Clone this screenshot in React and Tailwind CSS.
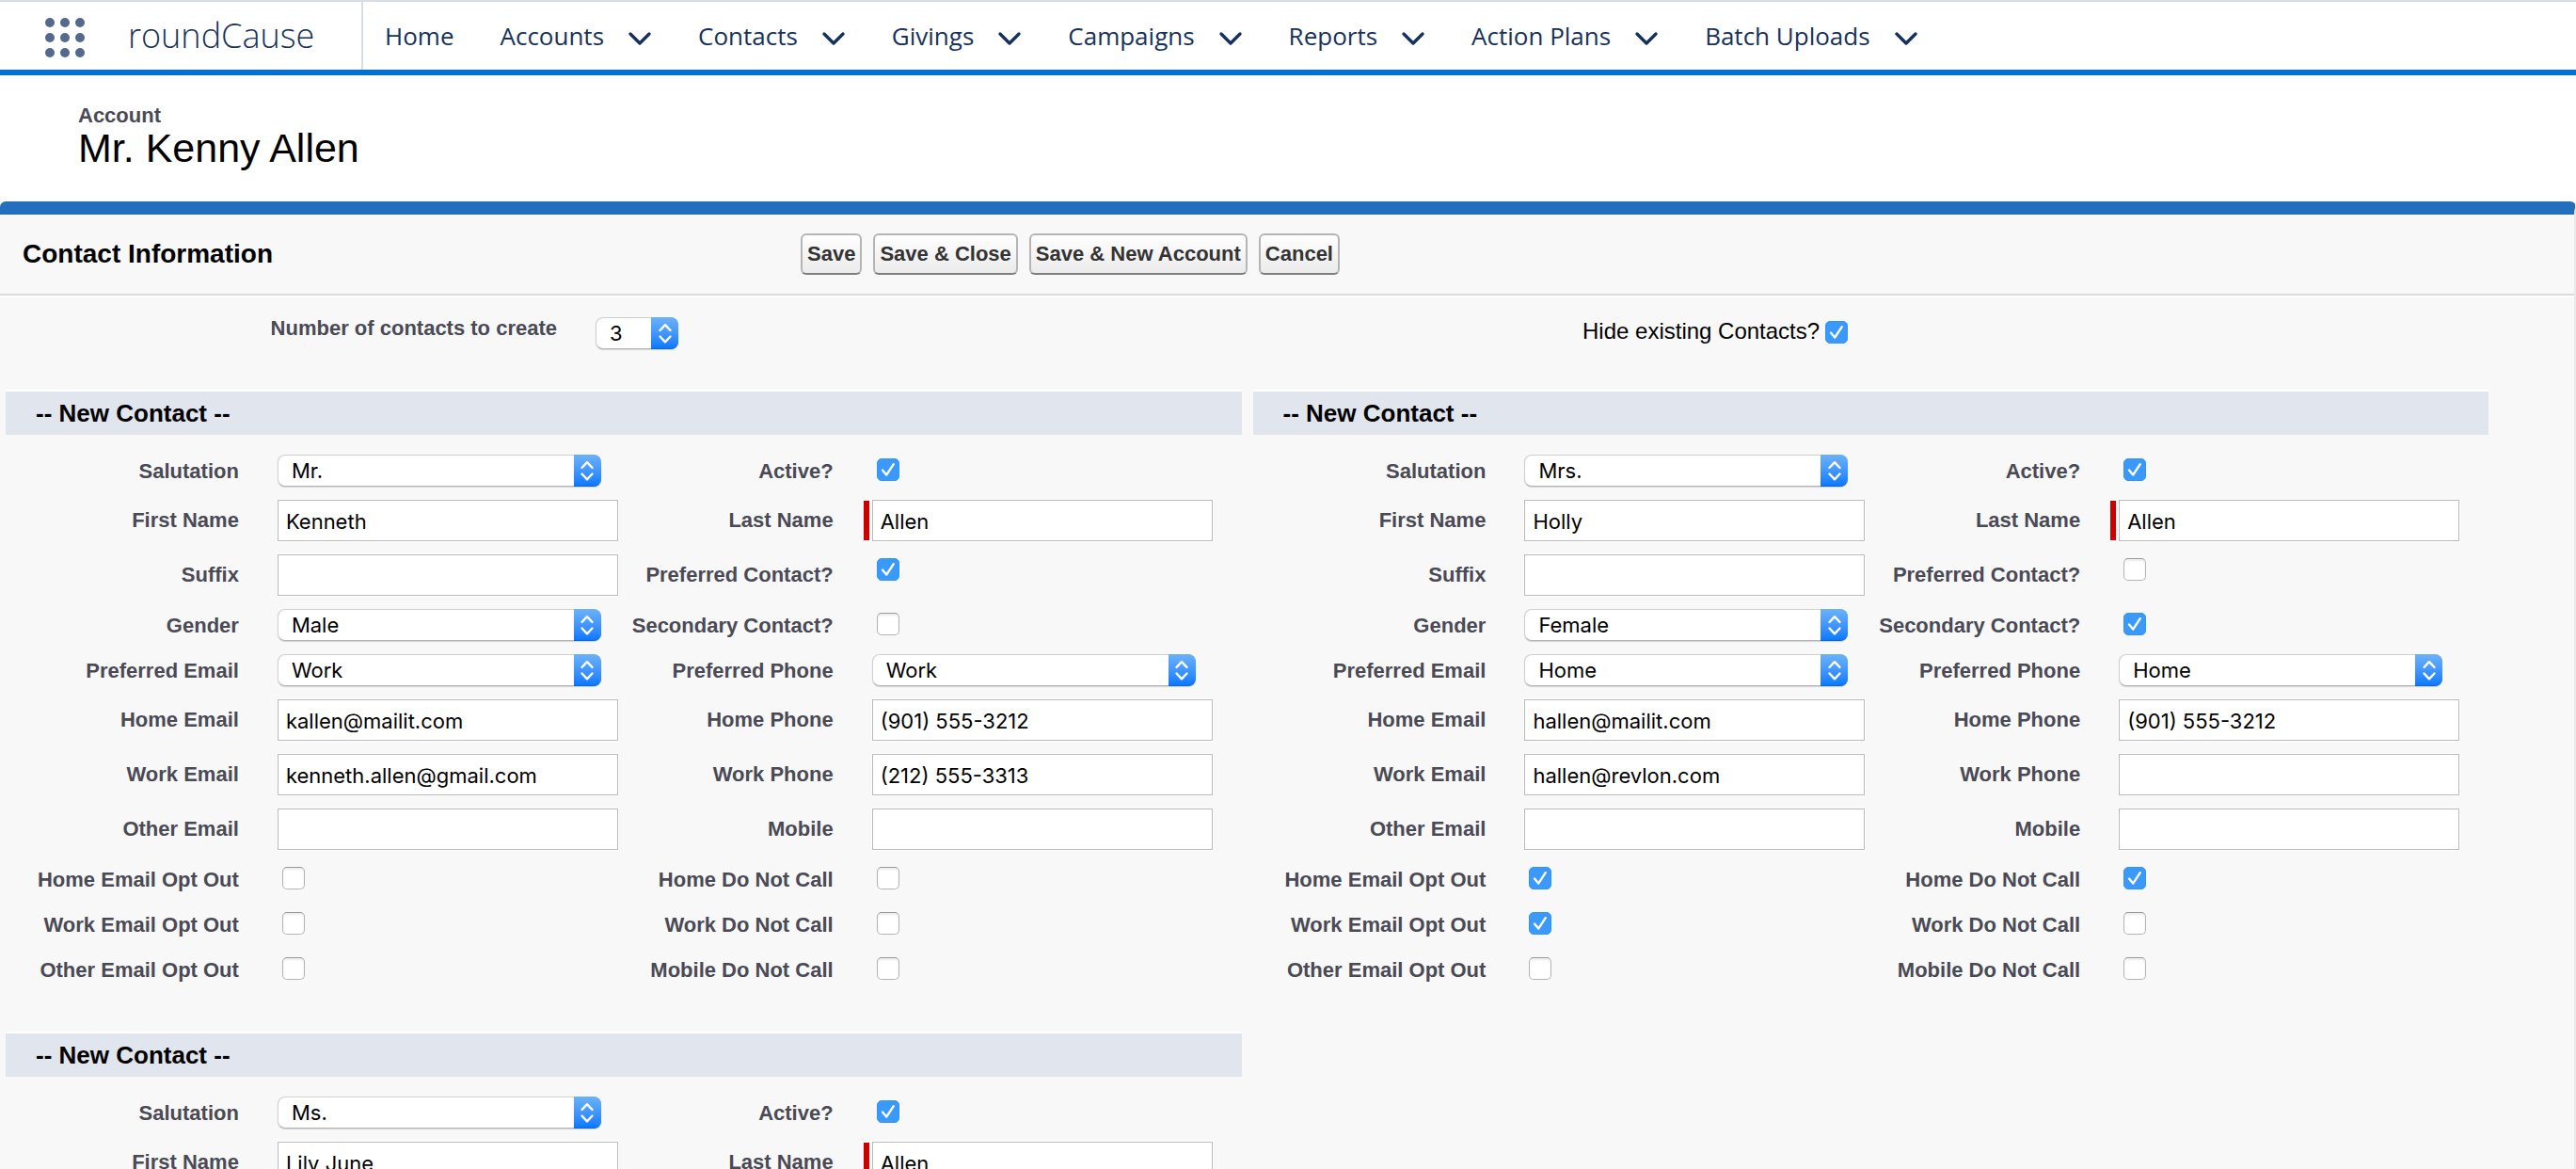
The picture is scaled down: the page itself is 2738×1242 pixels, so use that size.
import React, { useId } from "react";

const NAV_ITEMS = ["Accounts", "Contacts", "Givings", "Campaigns", "Reports", "Action Plans", "Batch Uploads"];

const CONTACTS = [
  {
    salutation: "Mr.", active: true, first: "Kenneth", last: "Allen", suffix: "", preferred: true,
    gender: "Male", secondary: false, prefEmail: "Work", prefPhone: "Work",
    homeEmail: "kallen@mailit.com", homePhone: "(901) 555-3212",
    workEmail: "kenneth.allen@gmail.com", workPhone: "(212) 555-3313",
    homeOut: false, workOut: false, otherOut: false, homeDnc: false, workDnc: false, mobileDnc: false,
  },
  {
    salutation: "Mrs.", active: true, first: "Holly", last: "Allen", suffix: "", preferred: false,
    gender: "Female", secondary: true, prefEmail: "Home", prefPhone: "Home",
    homeEmail: "hallen@mailit.com", homePhone: "(901) 555-3212",
    workEmail: "hallen@revlon.com", workPhone: "",
    homeOut: true, workOut: true, otherOut: false, homeDnc: true, workDnc: false, mobileDnc: false,
  },
  {
    salutation: "Ms.", active: true, first: "Lily June", last: "Allen", suffix: "", preferred: false,
    gender: "Female", secondary: false, prefEmail: "Home", prefPhone: "Home",
    homeEmail: "", homePhone: "", workEmail: "", workPhone: "",
    homeOut: false, workOut: false, otherOut: false, homeDnc: false, workDnc: false, mobileDnc: false,
  },
];

const SALUTATIONS = ["Mr.", "Mrs.", "Ms.", "Dr."];
const GENDERS = ["Male", "Female"];
const PLACES = ["Home", "Work", "Other"];

function Checkbox({ id, checked }) {
  return (
    <span className="grid size-6 shrink-0">
      <input
        id={id}
        type="checkbox"
        defaultChecked={checked}
        className="peer col-start-1 row-start-1 size-6 appearance-none rounded-[5px] border border-[#b4b4b4] border-t-[#999999] bg-white shadow-[inset_0_2px_2px_rgba(0,0,0,0.08)] checked:border-[#3394fb] checked:bg-[#3b99fc] checked:shadow-none"
      />
      <svg viewBox="0 0 24 24" className="pointer-events-none invisible col-start-1 row-start-1 size-6 peer-checked:visible" fill="none" stroke="white" strokeWidth="2.4" strokeLinecap="round" strokeLinejoin="round" aria-hidden="true">
        <path d="M6 12.6L10.2 17.6L17.8 6.2" />
      </svg>
    </span>
  );
}

function Select({ id, value, options, width }) {
  return (
    <span className={`relative block h-[34px] ${width}`}>
      <select
        id={id}
        defaultValue={value}
        className="block h-full w-full appearance-none rounded-lg border border-[#d0d0d0] border-b-[#b5b5b5] bg-white pr-8 pl-3.5 font-[Inter,sans-serif] text-[22px] leading-8 text-black shadow-[0_1px_1px_rgba(0,0,0,0.15)]"
      >
        {options.map((o) => (
          <option key={o}>{o}</option>
        ))}
      </select>
      <span className="pointer-events-none absolute inset-y-0 right-0 flex w-[29px] items-center justify-center rounded-r-lg border-b border-[#0a63f5] bg-linear-to-b from-[#6cb2fa] to-[#0679ff]">
        <svg viewBox="0 0 16 24" className="h-6 w-4" fill="none" stroke="white" strokeWidth="2.4" strokeLinecap="round" strokeLinejoin="round" aria-hidden="true">
          <path d="M2.5 9L8 3.2L13.5 9M2.5 15.5L8 21.3L13.5 15.5" />
        </svg>
      </span>
    </span>
  );
}

/* One label and its control; tall rows hold a text box. */
function Field({ label, type, value, options, tall, required }) {
  const id = useId();
  return (
    <>
      <div className={tall ? "min-w-0 pt-[13px] text-right" : "min-w-0 pt-[9px] text-right"}>
        <label htmlFor={id} className="block text-[22px] leading-[26px] font-bold whitespace-nowrap text-[#4a4a56]">{label}</label>
      </div>
      {type === "check" && (
        <div className="min-w-0 pt-2 pl-[46px]">
          <Checkbox id={id} checked={value} />
        </div>
      )}
      {type === "select" && (
        <div className="min-w-0 pt-1 pl-[41px]">
          <Select id={id} value={value} options={options} width="w-[344px]" />
        </div>
      )}
      {type === "text" && (
        <div className={required ? "flex min-w-0 items-start pt-1 pl-8" : "flex min-w-0 items-start pt-1 pl-[41px]"}>
          {required && <span className="mt-px mr-[3px] h-[42px] w-1.5 shrink-0 bg-[#cc0000]" />}
          <input
            id={id}
            type="text"
            defaultValue={value}
            required={required}
            className="h-11 w-[362px] border border-[#bababa] bg-white px-2 pt-0.5 font-[Inter,sans-serif] text-[22px] text-black shadow-[0_0_0_1px_white]"
          />
        </div>
      )}
    </>
  );
}

function Row({ left, right }) {
  const tall = left.type === "text";
  return (
    <div className={`grid grid-cols-[248fr_403fr_229fr_434fr] ${tall ? "h-[58px]" : "h-12"}`}>
      <Field {...left} tall={tall} />
      <Field {...right} tall={tall} />
    </div>
  );
}

function ContactBlock({ c }) {
  const rows = [
    [{ label: "Salutation", type: "select", value: c.salutation, options: SALUTATIONS }, { label: "Active?", type: "check", value: c.active }],
    [{ label: "First Name", type: "text", value: c.first }, { label: "Last Name", type: "text", value: c.last, required: true }],
    [{ label: "Suffix", type: "text", value: c.suffix }, { label: "Preferred Contact?", type: "check", value: c.preferred }],
    [{ label: "Gender", type: "select", value: c.gender, options: GENDERS }, { label: "Secondary Contact?", type: "check", value: c.secondary }],
    [{ label: "Preferred Email", type: "select", value: c.prefEmail, options: PLACES }, { label: "Preferred Phone", type: "select", value: c.prefPhone, options: PLACES }],
    [{ label: "Home Email", type: "text", value: c.homeEmail }, { label: "Home Phone", type: "text", value: c.homePhone }],
    [{ label: "Work Email", type: "text", value: c.workEmail }, { label: "Work Phone", type: "text", value: c.workPhone }],
    [{ label: "Other Email", type: "text", value: "" }, { label: "Mobile", type: "text", value: "" }],
    [{ label: "Home Email Opt Out", type: "check", value: c.homeOut }, { label: "Home Do Not Call", type: "check", value: c.homeDnc }],
    [{ label: "Work Email Opt Out", type: "check", value: c.workOut }, { label: "Work Do Not Call", type: "check", value: c.workDnc }],
    [{ label: "Other Email Opt Out", type: "check", value: c.otherOut }, { label: "Mobile Do Not Call", type: "check", value: c.mobileDnc }],
  ];
  return (
    <section className="pb-[39px]">
      <h3 className="mb-[17px] border-t-2 border-white bg-[#e1e5ee] pl-8 text-[26px] leading-[46px] font-bold text-black">-- New Contact --</h3>
      {rows.map(([left, right]) => (
        <Row key={left.label} left={left} right={right} />
      ))}
    </section>
  );
}

function NavBar() {
  return (
    <nav className="flex h-20 items-stretch border-t-2 border-b-[6px] border-t-[#d8dde6] border-b-[#0070d2] bg-white font-['Open_Sans',sans-serif] text-[#16325c]">
      <div className="flex w-[386px] shrink-0 items-center border-r-2 border-[#d8dde6] pl-12">
        <button type="button" aria-label="App Launcher" className="mr-[46px] pt-1">
          <svg viewBox="0 0 42 42" className="size-[42px]" fill="#54698d" aria-hidden="true">
            {[5, 21, 37].map((y) => [5, 21, 37].map((x) => <circle key={`${x}-${y}`} cx={x} cy={y} r="5" />))}
          </svg>
        </button>
        <span className="text-[36px] leading-[48px] font-light">roundCause</span>
      </div>
      <ul className="flex items-center gap-[49px] pl-[23px] text-[26px] leading-9">
        <li>
          <a href="#home">Home</a>
        </li>
        {NAV_ITEMS.map((item) => (
          <li key={item} className="flex items-center gap-[25px]">
            <a href={`#${item}`} className="whitespace-nowrap">{item}</a>
            <button type="button" aria-label={`${item} menu`} className="pt-1.5">
              <svg viewBox="0 0 26 16" className="h-4 w-[26px]" fill="none" stroke="#16325c" strokeWidth="3.4" strokeLinecap="round" strokeLinejoin="round" aria-hidden="true">
                <path d="M3 3L13 13L23 3" />
              </svg>
            </button>
          </li>
        ))}
      </ul>
    </nav>
  );
}

export default function App() {
  return (
    <div className="min-h-screen bg-white font-['Liberation_Sans',Arial,sans-serif]">
      <NavBar />
      <header className="h-[134px] pt-[30px] pl-[83px]">
        <p className="text-[22px] leading-[26px] font-bold text-[#4a4a56]">Account</p>
        <h1 className="text-[43px] leading-[42px] text-black">Mr. Kenny Allen</h1>
      </header>
      <main className="rounded-t-md border-t-[14px] border-r-2 border-t-[#236fbd] border-r-[#eaeaea] bg-[#f8f8f8]">
        <div className="grid h-[86px] grid-cols-[851fr_1885fr] items-center border-b-2 border-[#dbdbdb]">
          <h2 className="pl-6 text-[28px] leading-8 font-bold text-black">Contact Information</h2>
          <div className="flex gap-3">
            {["Save", "Save & Close", "Save & New Account", "Cancel"].map((b) => (
              <button
                key={b}
                type="button"
                className="h-11 rounded-md border-2 border-[#b5b5b5] border-b-[#7f7f7f] bg-linear-to-b from-white to-[#ebebeb] px-[5px] text-[22px] leading-[26px] font-bold whitespace-nowrap text-[#333333]"
              >
                {b}
              </button>
            ))}
          </div>
        </div>
        <div className="grid h-[100px] grid-cols-[592fr_1090fr_1054fr] border-t-2 border-white">
          <label htmlFor="contact-count" className="pt-5 text-right text-[22px] leading-[26px] font-bold text-[#4a4a56]">Number of contacts to create</label>
          <div className="pt-[21px] pl-[41px]">
            <Select id="contact-count" value="3" options={["1", "2", "3", "4"]} width="w-[88px]" />
          </div>
          <div className="flex items-start gap-1.5 pt-[22px]">
            <label htmlFor="hide-existing" className="text-2xl leading-7 text-black">Hide existing Contacts?</label>
            <span className="pt-[3px]">
              <Checkbox id="hide-existing" checked />
            </span>
          </div>
        </div>
        <div className="grid grid-cols-2 gap-x-3 pr-[91px] pl-1.5">
          {CONTACTS.map((c) => (
            <ContactBlock key={c.first} c={c} />
          ))}
        </div>
      </main>
    </div>
  );
}
